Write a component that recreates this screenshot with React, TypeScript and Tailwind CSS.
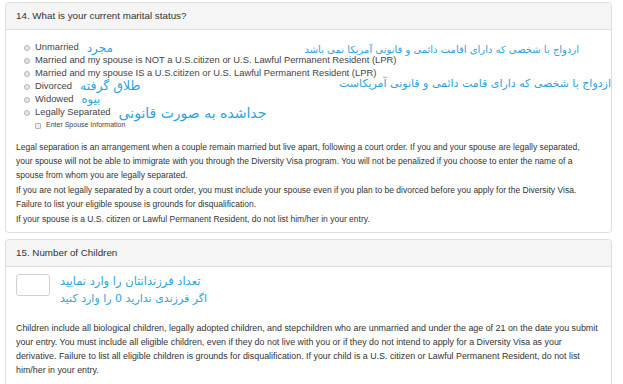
import React from 'react';

const fa = "font-['DejaVu_Sans',sans-serif] text-[#2ba3dd] leading-none";

const options = [
	{ label: 'Unmarried', note: 'مجرد', size: 'text-[12px]' },
	{ label: 'Married and my spouse is NOT a U.S.citizen or U.S. Lawful Permanent Resident (LPR)', note: '', size: '' },
	{ label: 'Married and my spouse IS a U.S.citizen or U.S. Lawful Permanent Resident (LPR)', note: '', size: '' },
	{ label: 'Divorced', note: 'طلاق گرفته', size: 'text-[12.5px]' },
	{ label: 'Widowed', note: 'بیوه', size: 'text-[11.5px]' },
	{ label: 'Legally Separated', note: 'جداشده به صورت قانونی', size: 'text-[14px]' },
];

function Radio() {
	return <span className="inline-block w-[6px] h-[6px] rounded-full border border-[#b5b5b5] bg-[#e6e6e6] shrink-0" />;
}

export default function App() {
	return (
		<div className="w-[623px] h-[384px] overflow-hidden bg-white font-['Liberation_Sans',sans-serif] text-[#333] pt-[2px] pl-[5px]">
			{/* Question 14 */}
			<div className="w-[607px] border border-[#dedede] rounded-[4px]">
				<div className="h-[27px] bg-[#f5f5f5] border-b border-[#dedede] rounded-t-[4px] flex items-center pl-[10px] text-[9.8px]">
					14. What is your current marital status?
				</div>
				<div className="relative pl-[10px] pr-[3px] pt-[11px] pb-[6px]">
					<div className="pl-[8px]">
						{options.map((o) => (
							<div key={o.label} className="h-[13px] flex items-center gap-[5px] text-[9.4px] text-[#444]">
								<Radio />
								<span>{o.label}</span>
								{o.note && <span dir="rtl" className={`${fa} ${o.size} ml-[3px]`}>{o.note}</span>}
							</div>
						))}
						<div className="h-[13px] flex items-center gap-[5px] pl-[11px] text-[7px] text-[#444]">
							<span className="inline-block w-[6px] h-[6px] border border-[#b5b5b5] bg-[#eee] rounded-[1px]" />
							<span>Enter Spouse Information</span>
						</div>
					</div>

					{/* Persian notes over the long options */}
					<div dir="rtl" className={`${fa} absolute right-[32px] top-[15px] text-[10px]`}>
						ازدواج با شخصی که دارای اقامت دائمی و قانونی آمریکا نمی باشد
					</div>
					<div dir="rtl" className={`${fa} absolute right-[0px] top-[48px] text-[11px]`}>
						ازدواج با شخصی که دارای قامت دائمی و قانونی آمریکاست
					</div>

					<div className="text-[8.5px] leading-[14px] text-[#333] mt-[8px]">
						<p>
							Legal separation is an arrangement when a couple remain married but live apart, following a court order. If you and your spouse are legally separated,<br />
							your spouse will not be able to immigrate with you through the Diversity Visa program. You will not be penalized if you choose to enter the name of a<br />
							spouse from whom you are legally separated.
						</p>
						<p className="mt-[1px]">
							If you are not legally separated by a court order, you must include your spouse even if you plan to be divorced before you apply for the Diversity Visa.<br />
							Failure to list your eligible spouse is grounds for disqualification.
						</p>
						<p className="mt-[1px]">
							If your spouse is a U.S. citizen or Lawful Permanent Resident, do not list him/her in your entry.
						</p>
					</div>
				</div>
			</div>

			{/* Question 15 */}
			<div className="w-[607px] mt-[6px] border border-[#dedede] rounded-[4px] h-[160px]">
				<div className="h-[27px] bg-[#f5f5f5] border-b border-[#dedede] rounded-t-[4px] flex items-center pl-[10px] text-[9.8px]">
					15. Number of Children
				</div>
				<div className="pl-[10px] pr-[10px] pt-[6px]">
					<div className="flex items-start gap-[10px]">
						<div className="w-[34px] h-[22px] border border-[#cfcfcf] rounded-[3px] bg-white mt-[1px]" />
						<div className="flex flex-col items-start">
							<div dir="rtl" className={`${fa} text-[11.5px] !leading-[17px]`}>تعداد فرزندانتان را وارد نمایید</div>
							<div dir="rtl" className={`${fa} text-[11px] !leading-[17px]`}>اگر فرزندی ندارید 0 را وارد کنید</div>
						</div>
					</div>
					<p className="text-[8.9px] leading-[14px] text-[#333] mt-[14px]">
						Children include all biological children, legally adopted children, and stepchildren who are unmarried and under the age of 21 on the date you submit your entry. You must include all eligible children, even if they do not live with you or if they do not intend to apply for a Diversity Visa as your derivative. Failure to list all eligible children is grounds for disqualification. If your child is a U.S. citizen or Lawful Permanent Resident, do not list him/her in your entry.
					</p>
				</div>
			</div>
		</div>
	);
}
